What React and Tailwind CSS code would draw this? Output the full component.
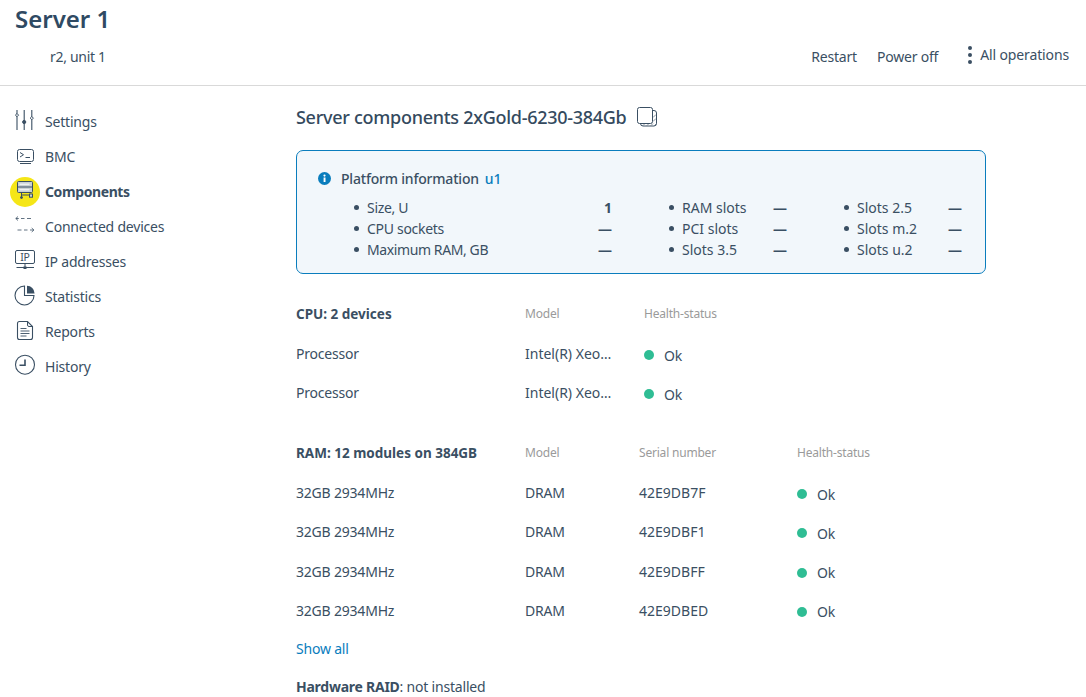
function Ico({ children }) {
  return (
    <svg width="24" height="35" viewBox="0 0 24 35" fill="none" stroke="#3a4f63" strokeWidth="1" className="block shrink-0">
      {children}
    </svg>
  );
}

const icons = {
  settings: (
    <Ico>
      <path d="M5 6v20M12.2 6v20M19.8 6v20" strokeWidth="1.1" />
      <path d="M5 9.5l1.6 1.6-1.6 1.6-1.6-1.6z" fill="#fff" />
      <circle cx="12.2" cy="18" r="1.6" fill="#3a4f63" />
      <path d="M19.8 12.5l1.6 1.6-1.6 1.6-1.6-1.6z" fill="#fff" />
    </Ico>
  ),
  bmc: (
    <Ico>
      <rect x="5.5" y="10.5" width="16" height="12" rx="2" />
      <path d="M8 13.5l3.5 2.2L8 18M13.5 18.5H18M8 24.5h11" />
    </Ico>
  ),
  components: (
    <Ico>
      <rect x="5.5" y="7.5" width="15" height="11" rx="1" fill="#c9d0d2" />
      <path d="M5.5 13h15" />
      <path d="M7.5 10.2h10M7.5 15.8h10" stroke="#fff" />
      <path d="M9.5 18.5v5M9.5 21h8" />
      <circle cx="9.5" cy="23.5" r="1" fill="#3a4f63" />
      <rect x="17.5" y="20" width="3" height="3.2" fill="#c9d0d2" />
    </Ico>
  ),
  connected: (
    <Ico>
      <path d="M6 7.5l-2.2 2 2.2 2M3.8 9.5h3M9 9.5h3.5M15 9.5h4M5.5 21h4M12 21h3.5M18 21h3.8M19.7 19l2.2 2-2.2 2" strokeWidth="0.8" />
    </Ico>
  ),
  ip: (
    <Ico>
      <rect x="3.5" y="6.5" width="19" height="13" rx="1.5" />
      <text x="13" y="17" textAnchor="middle" fontSize="10.5" fill="#3a4f63" stroke="none" fontFamily="Noto Sans, sans-serif">IP</text>
      <path d="M4.5 23.5H22M13 19.5v4" />
      <rect x="11.5" y="22.5" width="3" height="2.5" fill="#3a4f63" stroke="none" />
    </Ico>
  ),
  stats: (
    <Ico>
      <path d="M12.5 7A9.5 9.5 0 1022 16.5h-9.5z" strokeWidth="1.1" />
      <path d="M15 6.8A7.8 7.8 0 0122.6 14.4H15z" fill="#3a4f63" stroke="none" />
    </Ico>
  ),
  reports: (
    <Ico>
      <path d="M7.5 7.5h8l5 5v11a2 2 0 01-2 2h-11a2 2 0 01-2-2v-14a2 2 0 012-2z" strokeWidth="1.1" />
      <path d="M15.5 7.5v3.5a1.5 1.5 0 001.5 1.5h3.5" />
      <path d="M8.5 14.5h6M8.5 17h9M8.5 19.5h9M8.5 22h6" strokeWidth="0.9" />
    </Ico>
  ),
  history: (
    <Ico>
      <circle cx="13" cy="15.7" r="9.5" strokeWidth="1.1" />
      <path d="M13 10.5v5.7H7.5" strokeWidth="1.6" />
    </Ico>
  ),
};

const nav = [
  ["Settings", "settings"],
  ["BMC", "bmc"],
  ["Components", "components", true],
  ["Connected devices", "connected"],
  ["IP addresses", "ip"],
  ["Statistics", "stats"],
  ["Reports", "reports"],
  ["History", "history"],
];

function Info({ label, value, w }) {
  return (
    <div className="flex items-center h-[21px]">
      <span className="w-[5px] h-[5px] rounded-full bg-[#3a4f63] mr-[8px] shrink-0" />
      <span className={w}>{label}</span>
      <span className="w-[14px] text-right font-bold tracking-normal">{value}</span>
    </div>
  );
}

function Row({ cols, grid, h }) {
  return (
    <div className={`grid ${grid} ${h} items-center`}>
      {cols.map((c, i) =>
        i === cols.length - 1 ? (
          <div key={i} className="flex items-center gap-[10px] pt-[3px]">
            <span className="w-[10px] h-[10px] rounded-full bg-[#2fbd94] shrink-0" />
            <span>{c}</span>
          </div>
        ) : (
          <div key={i}>{c}</div>
        )
      )}
    </div>
  );
}

export default function App() {
  const cpuGrid = "grid-cols-[229px_119px_1fr]";
  const ramGrid = "grid-cols-[229px_114px_158px_1fr]";
  const model = <div className="w-[90px] whitespace-nowrap tracking-normal">Intel(R) Xeo…</div>;
  return (
    <div className="w-[1086px] h-[697px] overflow-hidden bg-white text-[#3a4f63] text-[14px] tracking-[-0.2px] font-['Noto_Sans',sans-serif]">
      <header className="h-[86px] border-b border-[#d9d9d9] flex justify-between pl-[15px] pr-[17px]">
        <div>
          <h1 className="text-[24px] leading-[30px] pt-[4px] font-semibold tracking-normal text-[#2f4a63]">Server 1</h1>
          <div className="pl-[35px] pt-[13px] leading-[20px] tracking-[-0.3px]">r2, unit 1</div>
        </div>
        <div className="flex items-start pt-[45px] leading-[22px]">
          <span className="mr-[20px] mt-[1px]">Restart</span>
          <span className="mr-[30px] mt-[1px]">Power off</span>
          <span className="flex flex-col gap-[3px] mr-[8px] mt-[1px]">
            <i className="w-[4px] h-[4px] rounded-full bg-[#3a4f63]" />
            <i className="w-[4px] h-[4px] rounded-full bg-[#3a4f63]" />
            <i className="w-[4px] h-[4px] rounded-full bg-[#3a4f63]" />
          </span>
          <span className="-mt-[1px] tracking-[-0.13px]">All operations</span>
        </div>
      </header>
      <div className="flex">
        <nav className="w-[296px] pt-[18px] shrink-0">
          {nav.map(([label, ic, active]) => (
            <div key={label} className="relative flex items-center h-[35px] pl-[12px] gap-[9px]">
              {active && <span className="absolute left-[10px] top-[3px] w-[30px] h-[30px] rounded-full bg-[#f5e617]" />}
              <span className="relative">{icons[ic]}</span>
              <span className={active ? "font-bold relative tracking-[-0.4px]" : "relative"}>{label}</span>
            </div>
          ))}
        </nav>
        <main className="w-[690px]">
          <div className="flex items-start pt-[17px] h-[64px]">
            <h2 className="text-[18px] leading-[28px] font-medium text-[#344a5e] tracking-[-0.28px]">Server components 2xGold-6230-384Gb</h2>
            <svg width="22" height="21" viewBox="0 0 22 21" fill="none" stroke="#3a4f63" className="ml-[10px] mt-[3px] shrink-0">
              <rect x="1.5" y="1.5" width="15" height="16" rx="2" fill="#fff" />
              <path d="M17 4.5h1a2.5 2.5 0 012.5 2.5v10.5a2.5 2.5 0 01-2.5 2.5H7a2.5 2.5 0 01-2.5-2.5" />
              <path d="M7 19.5l2-2M11 19.5l2-2M15 19.5l2-2M18.5 19.5l2-2M17 15.5l3-3M17 11.5l3-3" strokeWidth="0.6" />
            </svg>
          </div>
          <section className="h-[124px] border border-[#0a7dbd] rounded-[7px] bg-[#f2f7fb] pl-[21px] pt-[16px]">
            <div className="flex items-center h-[22px] font-medium">
              <svg width="13" height="13" viewBox="0 0 13 13" className="mr-[10px]">
                <circle cx="6.5" cy="6.5" r="6.5" fill="#0a7dbd" />
                <rect x="5.6" y="5.5" width="1.9" height="4.5" fill="#fff" />
                <circle cx="6.5" cy="3.6" r="1.1" fill="#fff" />
              </svg>
              <span>Platform information</span>
              <span className="ml-[6px] text-[#0a7dbd]">u1</span>
            </div>
            <div className="flex pl-[36px] pt-[8px]">
              <div className="w-[315px]">
                <Info label="Size, U" value="1" w="w-[231px] tracking-[-0.3px]" />
                <Info label="CPU sockets" value="—" w="w-[231px] tracking-[-0.3px]" />
                <Info label="Maximum RAM, GB" value="—" w="w-[231px] tracking-[-0.4px]" />
              </div>
              <div className="w-[175px] tracking-normal">
                <Info label="RAM slots" value="—" w="w-[91px]" />
                <Info label="PCI slots" value="—" w="w-[91px]" />
                <Info label="Slots 3.5" value="—" w="w-[91px]" />
              </div>
              <div className="tracking-normal">
                <Info label="Slots 2.5" value="—" w="w-[91px]" />
                <Info label="Slots m.2" value="—" w="w-[91px]" />
                <Info label="Slots u.2" value="—" w="w-[91px]" />
              </div>
            </div>
          </section>
          <div className="pt-[20px]">
            <div className={`grid ${cpuGrid} h-[40px] items-center`}>
              <div className="font-bold text-[13.5px] tracking-normal">CPU: 2 devices</div>
              <div className="text-[12px] text-[#9a9a9a]">Model</div>
              <div className="text-[12px] text-[#9a9a9a]">Health-status</div>
            </div>
            <Row grid={cpuGrid} h="h-[39px]" cols={["Processor", model, "Ok"]} />
            <Row grid={cpuGrid} h="h-[39px]" cols={["Processor", model, "Ok"]} />
          </div>
          <div className="pt-[21px]">
            <div className={`grid ${ramGrid} h-[40px] items-center`}>
              <div className="font-bold text-[13.5px] tracking-normal">RAM: 12 modules on 384GB</div>
              <div className="text-[12px] text-[#9a9a9a]">Model</div>
              <div className="text-[12px] text-[#9a9a9a]">Serial number</div>
              <div className="text-[12px] text-[#9a9a9a]">Health-status</div>
            </div>
            {["42E9DB7F", "42E9DBF1", "42E9DBFF", "42E9DBED"].map((s) => (
              <Row key={s} grid={ramGrid} h="h-[39.25px]" cols={["32GB 2934MHz", "DRAM", <span className="tracking-normal">{s}</span>, "Ok"]} />
            ))}
          </div>
          <div className="h-[37px] flex items-center text-[#0a7dbd]">Show all</div>
          <div className="h-[38px] flex items-center">
            <span><b className="font-bold tracking-[-0.25px]">Hardware RAID</b>: not installed</span>
          </div>
        </main>
      </div>
    </div>
  );
}
